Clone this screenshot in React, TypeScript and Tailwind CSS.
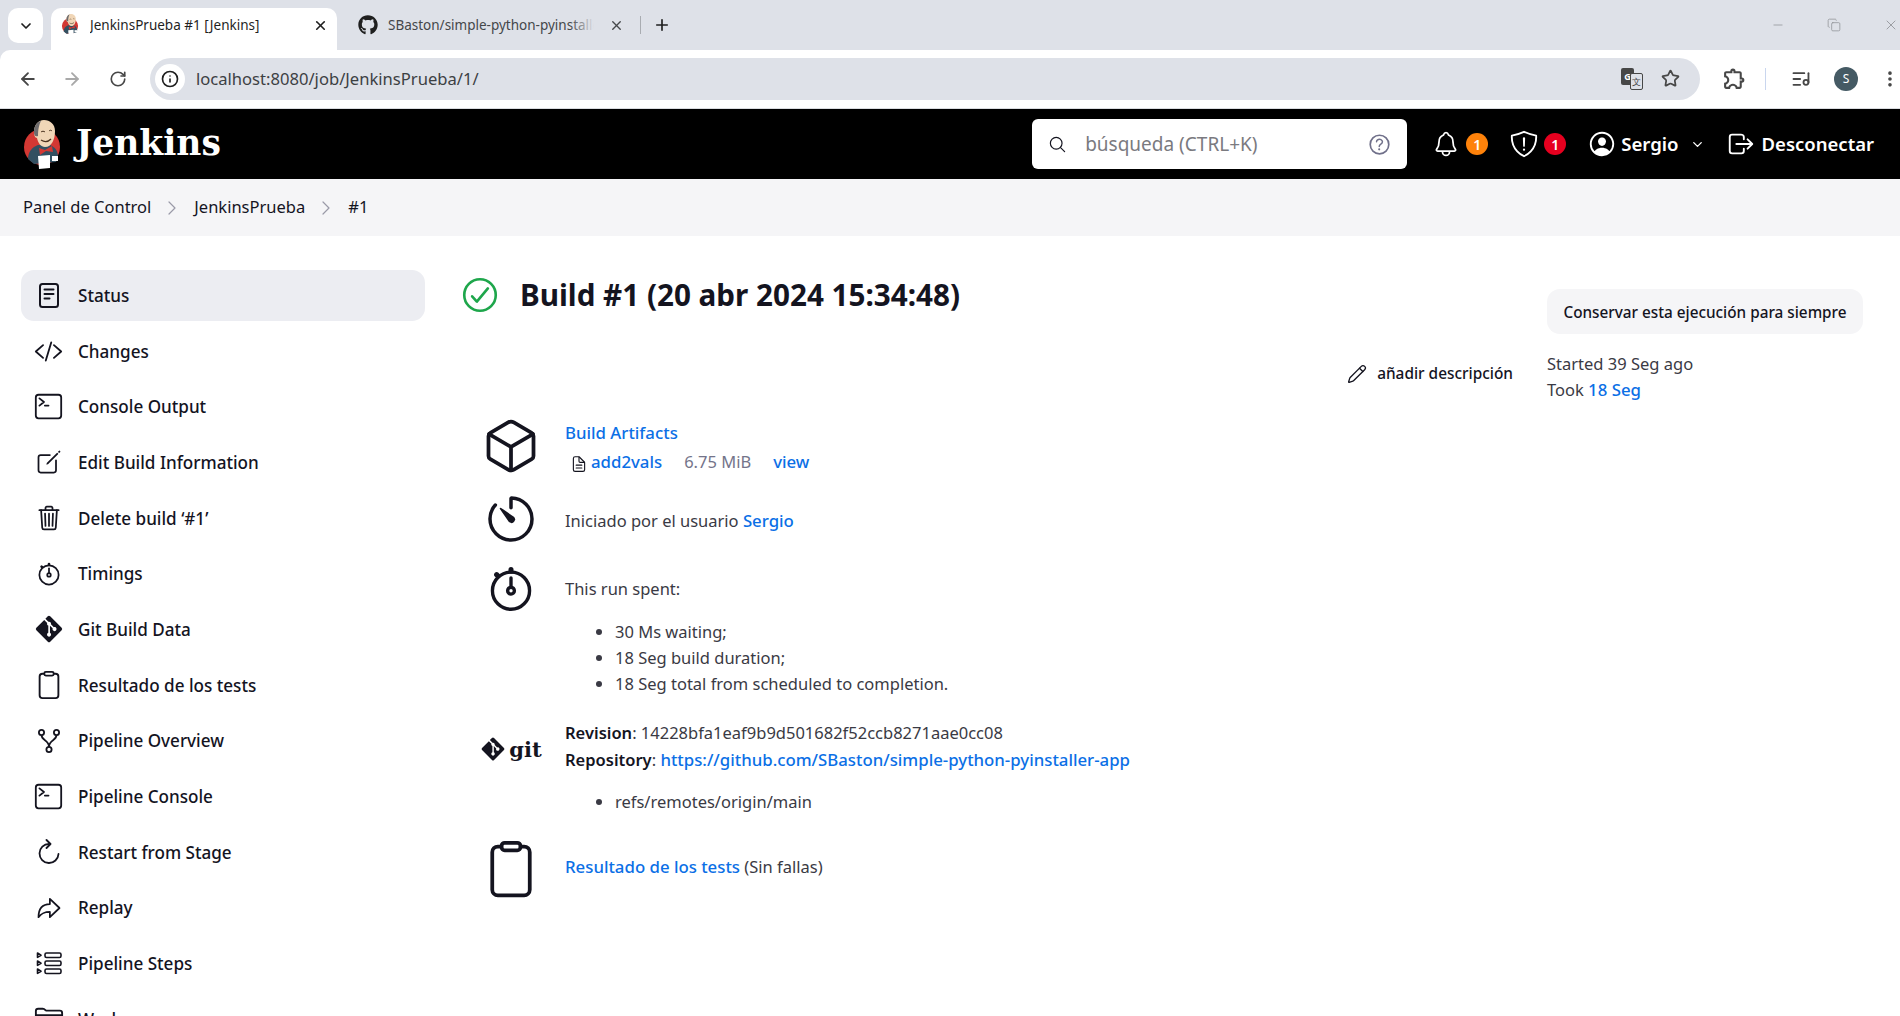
import {
  ArrowLeft,
  ArrowRight,
  ChevronDown,
  ChevronRight,
  Copy,
  Info,
  ListMusic,
  Minus,
  MoreVertical,
  Pencil,
  Plus,
  RotateCw,
  Star,
  X,
} from "lucide-react";
import { FaGitAlt, FaGithub } from "react-icons/fa";
import { MdOutlineExtension } from "react-icons/md";
import {
  IoAlertOutline,
  IoArrowRedoOutline,
  IoCheckmarkCircleOutline,
  IoClipboardOutline,
  IoCodeSlashOutline,
  IoCreateOutline,
  IoCubeOutline,
  IoDocumentTextOutline,
  IoFolderOutline,
  IoHelpCircleOutline,
  IoLogOutOutline,
  IoNotificationsOutline,
  IoPersonCircleOutline,
  IoSearchOutline,
  IoShieldOutline,
  IoStopwatchOutline,
  IoTerminalOutline,
  IoTimerOutline,
  IoTrashOutline,
} from "react-icons/io5";

function JenkinsLogo({ className }: { className?: string }) {
  return (
    <svg viewBox="0 0 36 49" className={className}>
      <circle cx="18" cy="27" r="18" fill="#d33833" />
      <path d="M4 39c0-7 4-12 10-14l12 0c5 2 8 6 8 12l-2 5-22 2z" fill="#335061" />
      <path d="M10 12C10 5 14 0 20 0s11 4 11 11c0 8-3 16-10 16-4 0-7-4-8-9-2 0-3-3-3-6z" fill="#f0d6b7" />
      <path d="M10 12C10 6 13 2 17 1c-2 4-3 8-3 15-3 1-4-1-4-4z" fill="#6d6b6d" />
      <path d="M17 12c1-1 3-1 4 0M25 11c1-1 2-1 3 0" stroke="#49321f" strokeWidth="1" fill="none" />
      <path d="M17 20c3 2 7 2 10-1" stroke="#49321f" strokeWidth="1.3" fill="none" />
      <path d="M15 28l6 2 7-4 1 6-7-1-6 4z" fill="#d33833" />
      <path d="M14 36l12-1 0 13-11 1z" fill="#ffffff" />
      <path d="M28 36h6v5h-6z" fill="#ffffff" />
    </svg>
  );
}

function StatusIcon() {
  return (
    <svg viewBox="0 0 20 26" className="h-[26px] w-[20px]" fill="none" stroke="#14141f" strokeWidth="2" strokeLinecap="round">
      <rect x="1" y="1" width="18" height="23" rx="2.5" />
      <path d="M5.5 6.5h9M5.5 11h9M5.5 15.5h5" />
    </svg>
  );
}

function ForkIcon() {
  return (
    <svg viewBox="0 0 24 26" className="h-[26px] w-[24px]" fill="none" stroke="#14141f" strokeWidth="1.8">
      <circle cx="4.5" cy="4.5" r="2.6" />
      <circle cx="19.5" cy="4.5" r="2.6" />
      <circle cx="12" cy="21.5" r="2.6" />
      <path d="M4.5 7c0 6 7.5 4.5 7.5 12M19.5 7c0 6-7.5 4.5-7.5 12" />
    </svg>
  );
}

function RestartIcon() {
  return (
    <svg viewBox="0 0 24 26" className="h-[26px] w-[24px]" fill="none" stroke="#14141f" strokeWidth="1.8" strokeLinecap="round" strokeLinejoin="round">
      <path d="M12 5a9.5 9.5 0 1 0 9.5 10" />
      <path d="M9.5 1l4 4-4 4" />
    </svg>
  );
}

function StepsIcon() {
  return (
    <svg viewBox="0 0 26 24" className="h-[24px] w-[26px]" fill="none" stroke="#14141f" strokeWidth="1.6" strokeLinejoin="round">
      <rect x="9" y="2" width="16" height="4.5" rx="1.5" />
      <rect x="9" y="10" width="16" height="4.5" rx="1.5" />
      <rect x="9" y="18" width="16" height="4.5" rx="1.5" />
      <path d="M1.5 2l3.5 2.2-3.5 2.2zM1.5 10l3.5 2.2-3.5 2.2zM1.5 18l3.5 2.2-3.5 2.2z" />
    </svg>
  );
}

function TranslateIcon() {
  return (
    <div className="relative h-[22px] w-[22px]">
      <div className="absolute left-0 top-0 flex h-[17px] w-[13px] items-center justify-center rounded-[2px] bg-[#474747] text-[9px] font-bold leading-none text-white">
        G
      </div>
      <div className="absolute bottom-0 right-0 flex h-[17px] w-[13px] items-center justify-center rounded-[2px] border border-[#474747] bg-[#dee1e8] text-[9px] leading-none text-[#474747]">
        文
      </div>
    </div>
  );
}

const sideItems = [
  { label: "Status", icon: <StatusIcon />, active: true },
  { label: "Changes", icon: <IoCodeSlashOutline size={29} color="#14141f" /> },
  { label: "Console Output", icon: <IoTerminalOutline size={29} color="#14141f" /> },
  { label: "Edit Build Information", icon: <IoCreateOutline size={28} color="#14141f" /> },
  { label: "Delete build ‘#1’", icon: <IoTrashOutline size={28} color="#14141f" /> },
  { label: "Timings", icon: <IoStopwatchOutline size={28} color="#14141f" /> },
  { label: "Git Build Data", icon: <FaGitAlt size={30} color="#14141f" /> },
  { label: "Resultado de los tests", icon: <IoClipboardOutline size={30} color="#14141f" /> },
  { label: "Pipeline Overview", icon: <ForkIcon /> },
  { label: "Pipeline Console", icon: <IoTerminalOutline size={29} color="#14141f" /> },
  { label: "Restart from Stage", icon: <RestartIcon /> },
  { label: "Replay", icon: <IoArrowRedoOutline size={28} color="#14141f" /> },
  { label: "Pipeline Steps", icon: <StepsIcon /> },
  { label: "Workspaces", icon: <IoFolderOutline size={30} color="#14141f" /> },
];

function BrowserChrome() {
  return (
    <div className="shrink-0 bg-[#dee1e8]">
      <div className="flex h-[50px] items-start pl-[8px] text-[13.5px] text-[#1f1f1f]">
        <div className="mt-[8px] flex h-[35px] w-[35px] items-center justify-center rounded-[10px] bg-white">
          <ChevronDown size={16} strokeWidth={2.6} />
        </div>
        <div className="ml-[8px] mt-[8px] flex h-[42px] w-[286px] items-center rounded-t-[10px] bg-white pb-[8px] pl-[10px]">
          <JenkinsLogo className="h-[22px] w-[18px]" />
          <span className="ml-[11px] flex-1 truncate">JenkinsPrueba #1 [Jenkins]</span>
          <X size={15} strokeWidth={2.6} className="mr-[9px]" />
        </div>
        <div className="flex h-[50px] items-center pl-[21px]">
          <FaGithub size={20} />
          <div className="relative ml-[10px] w-[206px] overflow-hidden whitespace-nowrap text-[#44474a]">
            SBaston/simple-python-pyinstaller-app
            <div className="absolute inset-y-0 right-0 w-[24px] bg-gradient-to-r from-transparent to-[#dee1e8]" />
          </div>
          <X size={15} strokeWidth={2.2} className="ml-[15px] text-[#44474a]" />
        </div>
        <div className="ml-[16px] mt-[16px] h-[18px] w-px bg-[#a9acb1]" />
        <Plus size={18} strokeWidth={2.2} className="ml-[12px] mt-[16px]" />
        <div className="ml-auto flex h-[50px] items-center gap-[42px] pr-[1px] text-[#8a8c90]">
          <Minus size={14} strokeWidth={1.2} />
          <Copy size={14} strokeWidth={1.2} />
          <X size={16} strokeWidth={1.2} />
        </div>
      </div>
      <div className="flex h-[59px] items-center rounded-tl-[10px] border-b border-[#dadce0] bg-white pb-[1px] pl-[18px] text-[#474747]">
        <ArrowLeft size={20} strokeWidth={2.2} />
        <ArrowRight size={20} strokeWidth={2.2} className="ml-[24px] text-[#a9a9a9]" />
        <RotateCw size={18} strokeWidth={2.2} className="ml-[27px]" />
        <div className="ml-[23px] flex h-[42px] w-[1552px] items-center rounded-full bg-[#dee1e8] pl-[5px] pr-[20px]">
          <div className="flex h-[30px] w-[30px] items-center justify-center rounded-full bg-white text-[#1f1f1f]">
            <Info size={18} strokeWidth={2.2} />
          </div>
          <span className="ml-[11px] flex-1 pt-px text-[16.6px] text-[#3c4043]">localhost:8080/job/JenkinsPrueba/1/</span>
          <TranslateIcon />
          <Star size={19} strokeWidth={2.2} className="ml-[18px]" />
        </div>
        <MdOutlineExtension size={25} className="ml-[22px]" />
        <div className="ml-[18px] h-[22px] w-px bg-[#c9d6ee]" />
        <ListMusic size={20} strokeWidth={2.2} className="ml-[25px]" />
        <div className="ml-[23px] flex h-[24px] w-[24px] items-center justify-center rounded-full bg-[#455a64] text-[12px] text-white">
          S
        </div>
        <MoreVertical size={20} strokeWidth={2.4} className="ml-[22px]" />
      </div>
    </div>
  );
}

function Header() {
  return (
    <header className="flex h-[70px] shrink-0 items-center bg-black pl-[24px] text-white">
      <JenkinsLogo className="h-[49px] w-[36px]" />
      <span className="ml-[16px] -mt-[2px] text-[34.5px] font-bold leading-none [font-family:'DejaVu_Serif',serif]">Jenkins</span>
      <div className="ml-auto flex h-[50px] w-[375px] items-center rounded-[6px] bg-white pl-[16px] pr-[14px] text-[#14141f]">
        <IoSearchOutline size={19} />
        <span className="ml-[18px] flex-1 text-[19px] text-[#7a7a7f]">búsqueda (CTRL+K)</span>
        <IoHelpCircleOutline size={27} color="#70708a" />
      </div>
      <IoNotificationsOutline size={28} className="ml-[25px]" />
      <span className="ml-[6px] flex h-[22px] w-[22px] items-center justify-center rounded-full bg-[#fe820a] text-[14px] font-semibold">1</span>
      <div className="relative ml-[21px] h-[30px] w-[28px]">
        <IoShieldOutline size={30} className="absolute left-0 top-0" />
        <IoAlertOutline size={18} className="absolute left-[6px] top-[6px]" />
      </div>
      <span className="ml-[7px] flex h-[22px] w-[22px] items-center justify-center rounded-full bg-[#e6001f] text-[14px] font-semibold">1</span>
      <IoPersonCircleOutline size={30} className="ml-[21px]" />
      <span className="ml-[4px] text-[18.6px] font-semibold">Sergio</span>
      <ChevronDown size={15} strokeWidth={2.2} className="ml-[11px]" />
      <IoLogOutOutline size={30} className="ml-[21px]" />
      <span className="ml-[6px] mr-[26px] text-[18.5px] font-semibold">Desconectar</span>
    </header>
  );
}

function Breadcrumb() {
  return (
    <nav className="flex h-[57px] shrink-0 items-center bg-[#f5f5f7] pl-[23px] text-[16.5px] text-[#14141f]">
      <span>Panel de Control</span>
      <ChevronRight size={24} strokeWidth={1.2} className="ml-[9px] text-[#9a9aa8]" />
      <span className="ml-[10px]">JenkinsPrueba</span>
      <ChevronRight size={24} strokeWidth={1.2} className="ml-[9px] text-[#9a9aa8]" />
      <span className="ml-[10px]">#1</span>
    </nav>
  );
}

function Sidebar() {
  return (
    <aside className="flex w-[404px] shrink-0 flex-col gap-[4.66px] text-[17.1px] font-medium text-[#14141f]">
      {sideItems.map((item) => (
        <div
          key={item.label}
          className={
            item.active
              ? "flex h-[51px] shrink-0 items-center rounded-[13px] bg-[#ecedf2]"
              : "flex h-[51px] shrink-0 items-center rounded-[13px]"
          }
        >
          <div className="flex w-[55px] shrink-0 justify-center">{item.icon}</div>
          <span className="ml-[2px] pt-px">{item.label}</span>
        </div>
      ))}
    </aside>
  );
}

function Row({ icon, children, className }: { icon: React.ReactNode; children: React.ReactNode; className?: string }) {
  return (
    <div className={"flex items-start " + (className ?? "")}>
      <div className="flex w-[84px] shrink-0 justify-center">{icon}</div>
      <div className="ml-[12px] min-w-0 flex-1">{children}</div>
    </div>
  );
}

const link = "text-[16.8px] font-medium text-[#0b6fe6]";

function BuildDetails() {
  return (
    <main className="ml-[44px] min-w-0 flex-1 pr-[37px] text-[16.5px] leading-[26px] text-[#3a3a44]">
      <div className="flex items-start justify-between">
        <div className="-ml-[7px] -mt-px flex items-center">
          <IoCheckmarkCircleOutline size={42} color="#1ea64b" className="-ml-[3px]" />
          <h1 className="ml-[19px] text-[29.65px] font-bold leading-[52px] text-[#14141f]">
            Build #1 (20 abr 2024 15:34:48)
          </h1>
        </div>
        <div className="flex flex-col items-start pt-[19px]">
          <div className="flex h-[45px] w-[316px] items-center justify-center rounded-[13px] bg-[#f5f5f7] text-[15.3px] font-medium text-[#14141f]">
            Conservar esta ejecución para siempre
          </div>
        </div>
      </div>
      <div className="-mt-[2px] flex justify-end">
        <div className="flex items-center pt-[13px] text-[15.4px] font-medium text-[#14141f]">
          <Pencil size={20} strokeWidth={1.6} className="mr-[10px]" />
          añadir descripción
        </div>
        <div className="ml-[34px] w-[316px] pt-[19px]">
          <div>Started 39 Seg ago</div>
          <div>
            Took <span className={link}>18 Seg</span>
          </div>
        </div>
      </div>
      <div className="mt-[17px]">
        <Row icon={<IoCubeOutline size={60} color="#14141f" className="-my-[4px]" />}>
          <div className={link}>Build Artifacts</div>
          <div className="mt-[3px] flex items-center pl-[5px]">
            <IoDocumentTextOutline size={18} color="#14141f" className="mt-[3px]" />
            <span className={"ml-[3px] " + link}>add2vals</span>
            <span className="ml-[22px] text-[#74748a]">6.75 MiB</span>
            <span className={"ml-[22px] " + link}>view</span>
          </div>
        </Row>
        <Row className="mt-[20px]" icon={<IoTimerOutline size={56} color="#14141f" className="-my-[4px]" />}>
          <div className="pt-[13px]">
            Iniciado por el usuario <span className={link}>Sergio</span>
          </div>
        </Row>
        <Row className="mt-[22px]" icon={<IoStopwatchOutline size={54} color="#14141f" className="-my-[3px]" />}>
          <div className="pt-[11px]">This run spent:</div>
          <ul className="mt-[17px] list-disc pl-[50px]">
            <li>30 Ms waiting;</li>
            <li>18 Seg build duration;</li>
            <li>18 Seg total from scheduled to completion.</li>
          </ul>
        </Row>
        <Row
          className="mt-[23px]"
          icon={
            <div className="flex items-center pt-[16px] text-[#14141f]">
              <FaGitAlt size={26} />
              <span className="ml-[3px] text-[21px] font-bold leading-none [font-family:'DejaVu_Serif',serif]">git</span>
            </div>
          }
        >
          <div>
            <b className="font-semibold text-[#14141f]">Revision</b>: 14228bfa1eaf9b9d501682f52ccb8271aae0cc08
          </div>
          <div className="mt-px">
            <b className="font-semibold text-[#14141f]">Repository</b>:{" "}
            <span className={link}>https://github.com/SBaston/simple-python-pyinstaller-app</span>
          </div>
          <ul className="mt-[16px] list-disc pl-[50px]">
            <li>refs/remotes/origin/main</li>
          </ul>
        </Row>
        <Row className="mt-[24px]" icon={<IoClipboardOutline size={60} color="#14141f" />}>
          <div className="pt-[15px]">
            <span className={link}>Resultado de los tests</span> (Sin fallas)
          </div>
        </Row>
      </div>
    </main>
  );
}

export default function App() {
  return (
    <div className="flex h-[1016px] w-[1900px] flex-col overflow-hidden bg-white [font-family:'Noto_Sans','Open_Sans',sans-serif]">
      <BrowserChrome />
      <Header />
      <Breadcrumb />
      <div className="flex min-h-0 flex-1 pl-[21px] pt-[34px]">
        <Sidebar />
        <BuildDetails />
      </div>
    </div>
  );
}
